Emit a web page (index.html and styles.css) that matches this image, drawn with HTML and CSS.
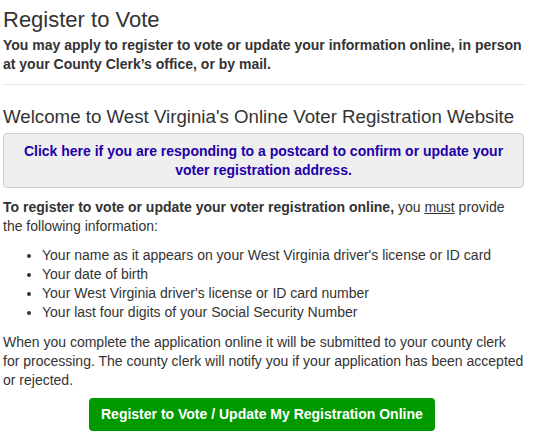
FILE: index.html
```html
<!DOCTYPE html>
<html>
<head>
<meta charset="utf-8">
<link rel="stylesheet" href="styles.css">
</head>
<body>
<div class="page">
  <h1 class="title">Register to Vote</h1>
  <p class="lead">You may apply to register to vote or update your information online, in person at your County Clerk’s office, or by mail.</p>
  <hr class="rule">
  <h2 class="welcome">Welcome to West Virginia's Online Voter Registration Website</h2>
  <div class="notice"><a href="#" class="notice-link">Click here if you are responding to a postcard to confirm or update your voter registration address.</a></div>
  <p class="text"><strong>To register to vote or update your voter registration online,</strong> you <u>must</u> provide the following information:</p>
  <ul class="list">
    <li>Your name as it appears on your West Virginia driver's license or ID card</li>
    <li>Your date of birth</li>
    <li>Your West Virginia driver's license or ID card number</li>
    <li>Your last four digits of your Social Security Number</li>
  </ul>
  <p class="text">When you complete the application online it will be submitted to your county clerk for processing. The county clerk will notify you if your application has been accepted or rejected.</p>
  <div class="actions"><a href="#" class="btn">Register to Vote / Update My Registration Online</a></div>
</div>
</body>
</html>
```
FILE: styles.css
```css
html, body { margin: 0; padding: 0; background: #fff; }
body { font-family: "Liberation Sans", Arial, sans-serif; color: #333; font-size: 14px; line-height: 19px; }
.page { width: 521px; padding: 0 3px; }
.title { font-size: 22px; font-weight: normal; line-height: 26px; margin: 7px 0 3px; color: #333; }
.lead { font-weight: bold; margin: 0; line-height: 19px; }
.rule { border: 0; border-top: 1px solid #e6e6e6; margin: 10px 0 0; height: 0; }
.welcome { font-size: 18.7px; font-weight: normal; line-height: 24px; margin: 20px 0 0; color: #333; }
.notice { margin-top: 4px; background: #efefef; border: 1px solid #cfcfcf; border-radius: 4px; padding: 8px 10px 7px; text-align: center; }
.notice-link { color: #2200aa; font-weight: bold; text-decoration: none; }
.text { margin: 10px 0 0; }
.list { margin: 10px 0 0; padding-left: 39px; }
.list li { margin: 0; }
.list + .text { margin-top: 11px; }
.actions { margin-top: 8px; text-align: left; padding-left: 86px; }
.btn { display: inline-block; background: #009a00; color: #fff; font-weight: bold; text-decoration: none; padding: 7px 12px; border-radius: 4px; line-height: 19px; }
```
